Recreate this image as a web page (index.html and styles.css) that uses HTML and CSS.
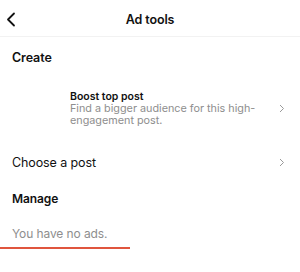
FILE: index.html
```html
<!DOCTYPE html>
<html lang="en">
<head>
  <meta charset="UTF-8">
  <title>Ad tools</title>
  <link rel="stylesheet" href="styles.css">
</head>
<body>
  <div class="barra">
    <a class="atras" href="#">
      <svg width="10" height="15" viewBox="0 0 10 15"><path d="M8 1.5 2 7.5l6 6" fill="none" stroke="#111" stroke-width="1.8" stroke-linecap="round" stroke-linejoin="round"/></svg>
    </a>
    <div class="titulo">Ad tools</div>
  </div>

  <div class="seccion">Create</div>

  <div class="fila boost">
    <div class="miniatura"></div>
    <div class="texto">
      <div class="nombre">Boost top post</div>
      <div class="detalle">Find a bigger audience for this high-engagement post.</div>
    </div>
    <svg class="flecha" width="6" height="9" viewBox="0 0 6 9"><path d="M1 1l3.5 3.5L1 8" fill="none" stroke="#9a9a9a" stroke-width="1"/></svg>
  </div>

  <div class="fila elegir">
    <div class="texto">Choose a post</div>
    <svg class="flecha" width="6" height="9" viewBox="0 0 6 9"><path d="M1 1l3.5 3.5L1 8" fill="none" stroke="#9a9a9a" stroke-width="1"/></svg>
  </div>

  <div class="seccion manage">Manage</div>

  <div class="vacio">You have no ads.</div>
  <div class="subrayado"></div>
</body>
</html>
```

FILE: styles.css
```css
body {
  margin: 0;
  font-family: Inter, "Noto Sans", sans-serif;
  color: #111;
  background-color: #fff;
}

.barra {
  position: relative;
  height: 33px;
  padding-top: 3px;
  border-bottom: 1px solid #f2f2f2;
  display: flex;
  align-items: center;
  justify-content: center;
}

.atras {
  position: absolute;
  left: 6px;
  top: 12px;
  display: flex;
}

.titulo {
  font-size: 12.5px;
  font-weight: 600;
  letter-spacing: -0.1px;
}

.seccion {
  padding: 13px 12px 0;
  font-size: 12.5px;
  font-weight: 600;
  letter-spacing: -0.1px;
}

.fila {
  display: flex;
  align-items: center;
  padding: 0 15px 0 12px;
}

.boost {
  margin-top: 20px;
}

.miniatura {
  width: 46px;
  height: 46px;
  margin-right: 12px;
  flex-shrink: 0;
}

.boost .texto {
  flex: 1;
  padding-right: 14px;
}

.nombre {
  font-size: 10.5px;
  font-weight: 600;
  line-height: 13px;
}

.detalle {
  font-size: 10.8px;
  color: #8e8e8e;
  line-height: 12px;
}

.elegir {
  margin-top: 24px;
}

.elegir .texto {
  flex: 1;
  font-size: 12.5px;
  letter-spacing: -0.1px;
}

.flecha {
  flex-shrink: 0;
}

.manage {
  margin-top: 8px;
  font-size: 12px;
}

.vacio {
  padding: 20px 12px 0;
  font-size: 12px;
  color: #8e8e8e;
  letter-spacing: -0.1px;
}

.subrayado {
  margin-top: 6px;
  width: 130px;
  height: 2px;
  background-color: #e0553d;
}
```
